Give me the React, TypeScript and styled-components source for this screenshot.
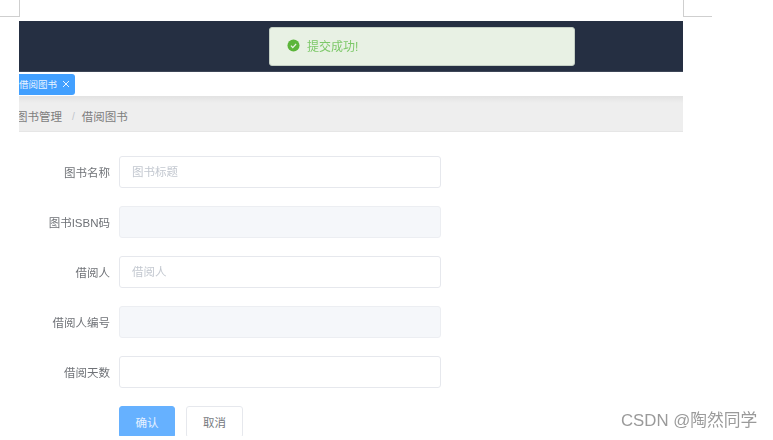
import styled, { createGlobalStyle } from "styled-components";

const GlobalStyle = createGlobalStyle`
  * { box-sizing: border-box; }
  html, body { margin: 0; padding: 0; background: #fff; }
  body {
    width: 773px;
    height: 440px;
    overflow: hidden;
    font-family: "Liberation Sans", "Noto Sans CJK SC", sans-serif;
  }
`;

const Page = styled.div`
  position: relative;
  width: 773px;
  height: 440px;
  overflow: hidden;
`;

const MarkStrip = styled.div`
  width: 712px;
  height: 21px;
  display: flex;
  justify-content: space-between;
  align-items: flex-start;
`;

const CropMark = styled.div<{ $side: "left" | "right" }>`
  width: ${(p) => (p.$side === "left" ? "20px" : "29px")};
  height: 17px;
  border-bottom: 1px solid #cfcfcf;
  ${(p) => (p.$side === "left" ? "border-right" : "border-left")}: 1px solid #cfcfcf;
`;

const Sheet = styled.div`
  width: 664px;
  height: 415px;
  margin-left: 19px;
  overflow: hidden;
  filter: blur(0.35px);
`;

const Navbar = styled.div`
  height: 51px;
  background: #252f42;
  border-bottom: 1px solid #3d4657;
`;

const TagBar = styled.div`
  height: 24px;
  background: #fff;
  display: flex;
  align-items: center;
`;

const Tag = styled.div`
  height: 21px;
  width: 56px;
  padding-right: 5px;
  background: #42a0ff;
  border-radius: 0 3px 3px 0;
  color: #e8f3ff;
  font-size: 9.5px;
  display: flex;
  align-items: center;
  justify-content: space-between;
  white-space: nowrap;
  overflow: hidden;
`;

const TagClose = styled.svg`
  width: 8px;
  height: 8px;
  flex: none;
`;

const Breadcrumb = styled.div`
  height: 36px;
  padding-top: 5px;
  background: linear-gradient(#e2e2e2 0, #eeeeee 7px);
  border-bottom: 1px solid #e6e6e6;
  display: flex;
  align-items: center;
  font-size: 11.5px;
  color: #7d7d7d;
  overflow: hidden;
`;

const Crumb = styled.span<{ $clip?: boolean }>`
  white-space: nowrap;
  margin-left: ${(p) => (p.$clip ? "-3px" : "0")};
`;

const CrumbSep = styled.span`
  color: #c0c4cc;
  margin: 0 7px 0 10px;
  font-size: 10px;
`;

const Form = styled.div`
  padding-top: 24px;
  display: flex;
  flex-direction: column;
  gap: 18px;
`;

const Row = styled.div`
  display: flex;
  align-items: center;
  gap: 9px;
`;

const Label = styled.div`
  width: 91px;
  text-align: right;
  font-size: 11.5px;
  color: #6f7277;
  white-space: nowrap;
`;

const Field = styled.input`
  width: 322px;
  height: 32px;
  padding: 0 12px;
  border: 1px solid #e6e8ed;
  border-radius: 3px;
  background: #fff;
  font: inherit;
  font-size: 11.5px;
  outline: none;

  &::placeholder {
    color: #c3c8d0;
    opacity: 1;
  }

  &:disabled {
    background: #f5f7fa;
    border-color: #eceef2;
  }
`;

const Actions = styled.div`
  display: flex;
  gap: 11px;
  margin-left: 100px;
`;

const Button = styled.div<{ $primary?: boolean }>`
  width: ${(p) => (p.$primary ? "56px" : "57px")};
  height: 32px;
  border-radius: 3px;
  border: 1px solid ${(p) => (p.$primary ? "#66b1ff" : "#e6e8ed")};
  background: ${(p) => (p.$primary ? "#66b1ff" : "#fff")};
  color: ${(p) => (p.$primary ? "#e6f2ff" : "#76797e")};
  font-size: 11.5px;
  display: flex;
  align-items: center;
  justify-content: center;
`;

const Toast = styled.div`
  position: absolute;
  left: 269px;
  top: 27px;
  width: 306px;
  height: 39px;
  padding: 0 0 2px 17px;
  display: flex;
  align-items: center;
  gap: 7px;
  background: #e8f1e4;
  border: 1px solid #c4cfc4;
  border-radius: 3px;
  color: #7cc868;
  font-size: 12px;
  filter: blur(0.35px);
`;

const ToastIcon = styled.svg`
  width: 13px;
  height: 13px;
  flex: none;
`;

const Watermark = styled.div`
  position: absolute;
  left: 621px;
  top: 410px;
  color: #9a9a9a;
  font-size: 16.8px;
  line-height: 22px;
  white-space: nowrap;
`;

const rows = [
  { label: "图书名称", placeholder: "图书标题" },
  { label: "图书ISBN码", disabled: true },
  { label: "借阅人", placeholder: "借阅人" },
  { label: "借阅人编号", disabled: true },
  { label: "借阅天数" },
];

export default function App() {
  return (
    <Page>
      <GlobalStyle />
      <MarkStrip>
        <CropMark $side="left" />
        <CropMark $side="right" />
      </MarkStrip>
      <Sheet>
        <Navbar />
        <TagBar>
          <Tag>
            借阅图书
            <TagClose viewBox="0 0 8 8">
              <path d="M1 1l6 6M7 1L1 7" stroke="#e8f3ff" strokeWidth="1" fill="none" />
            </TagClose>
          </Tag>
        </TagBar>
        <Breadcrumb>
          <Crumb $clip>图书管理</Crumb>
          <CrumbSep>/</CrumbSep>
          <Crumb>借阅图书</Crumb>
        </Breadcrumb>
        <Form>
          {rows.map((r) => (
            <Row key={r.label}>
              <Label>{r.label}</Label>
              <Field placeholder={r.placeholder} disabled={r.disabled} />
            </Row>
          ))}
          <Actions>
            <Button $primary>确认</Button>
            <Button>取消</Button>
          </Actions>
        </Form>
      </Sheet>
      <Toast>
        <ToastIcon viewBox="0 0 14 14">
          <circle cx="7" cy="7" r="6.5" fill="#5bb53a" />
          <path d="M4.2 7.2l2 2 3.6-3.8" stroke="#e8f1e4" strokeWidth="1.3" fill="none" />
        </ToastIcon>
        提交成功!
      </Toast>
      <Watermark>CSDN @陶然同学</Watermark>
    </Page>
  );
}
